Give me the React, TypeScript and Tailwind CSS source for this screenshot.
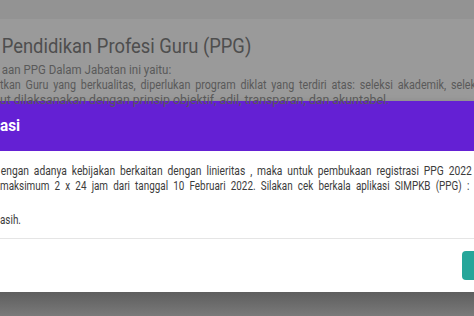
export default function App() {
  return (
    <div
      className="w-[474px] h-[316px] overflow-hidden flex flex-col bg-[#9a9a9a]"
      style={{ fontFamily: 'Roboto, "Noto Sans", sans-serif' }}
    >
      {/* dimmed page behind the modal */}
      <div className="h-[19px] bg-[#939393] shrink-0" />
      <div className="h-[82px] shrink-0 whitespace-nowrap text-[#595959]">
        <h1 className="pl-[2px] pt-[15px] text-[21px] leading-[24px] text-[#4e4e4e] origin-left scale-x-[0.875]">
          Pendidikan Profesi Guru (PPG)
        </h1>
        <p className="mt-[4px] pl-[2px] text-[12.5px] leading-[15px] origin-left scale-x-[0.92]">
          aan PPG Dalam Jabatan ini yaitu:
        </p>
        <p className="text-[12.5px] leading-[15px] origin-left scale-x-[0.86] [word-spacing:2.5px]">
          tkan Guru yang berkualitas, diperlukan program diklat yang terdiri atas: seleksi akademik, seleksi
        </p>
        <p className="text-[12.5px] leading-[15px] origin-left scale-x-[0.985]">
          ut dilaksanakan dengan prinsip objektif, adil, transparan, dan akuntabel.
        </p>
      </div>

      {/* modal */}
      <div className="shrink-0 bg-white shadow-[0_4px_8px_rgba(0,0,0,0.35)]">
        <div className="h-[50px] bg-[#6420d4] flex items-center">
          <span className="text-white font-bold text-[17px] origin-left scale-x-[0.9]">asi</span>
        </div>
        <div className="h-[88px] border-b border-[#e5e5e5] whitespace-nowrap text-[#3c3c3c] text-[13px] leading-[15px] pt-[12px]">
          <p className="pl-[1px] origin-left scale-x-[0.79] [word-spacing:3px]">
            engan adanya kebijakan berkaitan dengan linieritas , maka untuk pembukaan registrasi PPG 2022
          </p>
          <p className="origin-left scale-x-[0.76] [word-spacing:3.6px]">
            maksimum 2 x 24 jam dari tanggal 10 Februari 2022. Silakan cek berkala aplikasi SIMPKB (PPG) :
          </p>
          <p className="mt-[19px] origin-left scale-x-[0.76]">asih.</p>
        </div>
        <div className="h-[53px] flex items-center justify-end">
          <div className="w-[12px] h-[29px] bg-[#26a69a] rounded-l-[4px]" />
        </div>
      </div>
      <div className="flex-1 bg-gradient-to-b from-[#5e5e5e] to-[#7a7a7a]" />
    </div>
  );
}
